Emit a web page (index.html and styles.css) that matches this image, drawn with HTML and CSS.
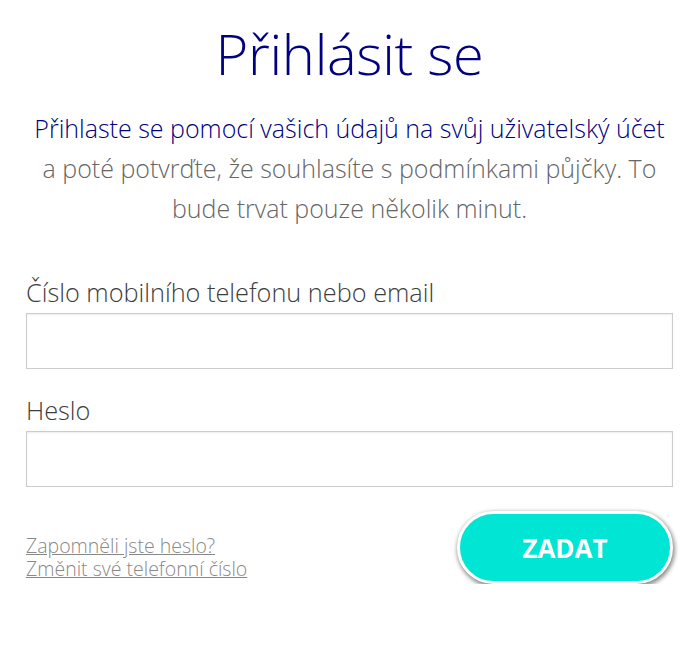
FILE: index.html
```html
<!DOCTYPE html>
<html lang="cs">
<head>
    <meta charset="UTF-8">
    <meta name="viewport" content="width=device-width, initial-scale=1.0">
    <title>Přihlásit se</title>
    <link rel="stylesheet" href="styles.css">
</head>
<body>
    <div class="login">
        <h1>Přihlásit se</h1>
        <p class="intro">
            <span class="intro-lead">Přihlaste se pomocí vašich údajů na svůj uživatelský účet</span>
            a poté potvrďte, že souhlasíte s podmínkami půjčky. To bude trvat pouze několik minut.
        </p>

        <form id="loginForm">
            <div class="form-group">
                <label for="login">Číslo mobilního telefonu nebo email</label>
                <input type="text" id="login">
            </div>

            <div class="form-group">
                <label for="password">Heslo</label>
                <input type="password" id="password">
            </div>

            <div class="form-footer">
                <div class="links">
                    <a href="#">Zapomněli jste heslo?</a>
                    <a href="#">Změnit své telefonní číslo</a>
                </div>
                <button type="submit">ZADAT</button>
            </div>
        </form>
    </div>
</body>
</html>
```

FILE: styles.css
```css
body {
    margin: 0;
    background-color: white;
    font-family: "Open Sans", Arial, sans-serif;
    font-weight: 300;
}

.login {
    padding: 15px 14px 0 26px;
}

h1 {
    margin: 0;
    text-align: center;
    color: #000080;
    font-size: 56px;
    font-weight: 300;
    line-height: 76px;
    letter-spacing: -0.3px;
}

.intro {
    margin: 17px 0 0;
    text-align: center;
    color: #666;
    font-size: 25px;
    line-height: 40px;
}

.intro-lead {
    display: block;
    color: #000080;
}

#loginForm {
    margin-top: 47px;
}

.form-group {
    margin-bottom: 24px;
}

label {
    display: block;
    margin-bottom: 4px;
    color: #3d3d3d;
    font-size: 25.3px;
    line-height: 34px;
}

input {
    display: block;
    box-sizing: border-box;
    width: 100%;
    height: 56px;
    border: 1px solid #ccc;
    box-shadow: inset 0 1px 2px rgba(0,0,0,0.08);
    font-size: 18px;
    padding: 0 12px;
}

.form-footer {
    display: flex;
    justify-content: space-between;
    align-items: flex-end;
}

.links {
    padding-bottom: 4px;
}

.links a {
    display: block;
    color: #888;
    font-size: 19.5px;
    line-height: 23px;
}

button {
    width: 216px;
    height: 73px;
    border: 3px solid white;
    border-radius: 40px;
    background-color: #00e5d4;
    box-shadow: 1px 2px 4px 1px rgba(0,0,0,0.45);
    color: white;
    font-family: "Open Sans", Arial, sans-serif;
    font-size: 26px;
    font-weight: 700;
    cursor: pointer;
}
```
